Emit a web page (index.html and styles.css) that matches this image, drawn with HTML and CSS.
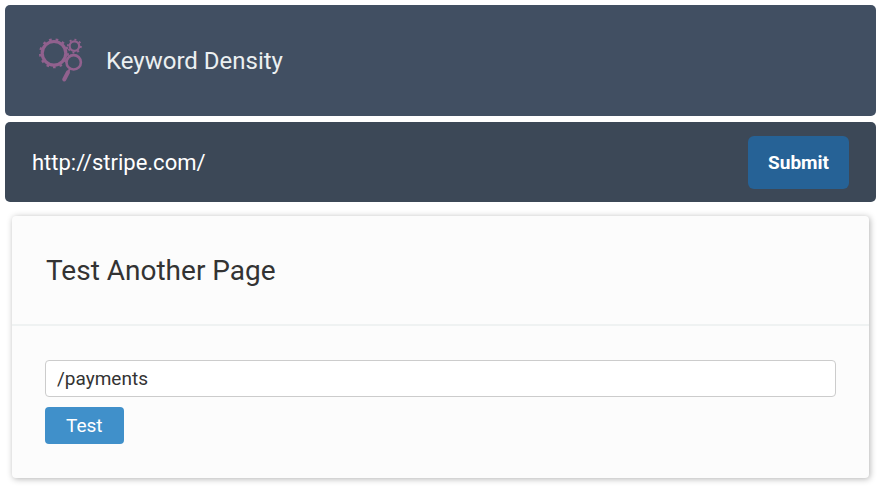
FILE: index.html
```html
<!DOCTYPE html>
<html lang="en">
<head>
    <meta charset="UTF-8">
    <meta name="viewport" content="width=device-width, initial-scale=1.0">
    <title>Keyword Density</title>
    <link rel="stylesheet" href="styles.css">
</head>
<body>

<header class="header">
    <svg class="logo" viewBox="0 0 46 46" fill="none" stroke="#91618e" aria-hidden="true">
        <!-- big gear -->
        <circle cx="16" cy="15.8" r="11.8" stroke-width="3.2"/>
        <circle cx="16" cy="15.8" r="13.8" stroke-width="2.4" pathLength="130" stroke-dasharray="4 6"/>
        <!-- small gear -->
        <circle cx="36.4" cy="8.6" r="4.8" stroke-width="2.3"/>
        <circle cx="36.4" cy="8.6" r="6.5" stroke-width="1.8" pathLength="80" stroke-dasharray="4 6"/>
        <!-- magnifier -->
        <circle cx="35.7" cy="24.8" r="7.2" stroke-width="2.6"/>
        <path d="M31.8 31.4l-1.4 2.6" stroke-width="2"/>
        <path d="M30 34.8l-3.8 7.2" stroke-width="4" stroke-linecap="round"/>
    </svg>
    <h1>Keyword Density</h1>
</header>

<div class="url-bar">
    <span class="url">http://stripe.com/</span>
    <button class="submit" type="button">Submit</button>
</div>

<section class="card">
    <h2>Test Another Page</h2>
    <form class="test-form">
        <input class="path" type="text" value="/payments" aria-label="Page path">
        <button class="test" type="button">Test</button>
    </form>
</section>

</body>
</html>
```

FILE: styles.css
```css
* {
    box-sizing: border-box;
}

body {
    min-height: 100vh;
    margin: 0;
    padding: 5px 9px 8px 5px;
    font-family: Roboto, sans-serif;
    background: #fff;
    color: #333;
}

h1, h2 {
    margin: 0;
    font-weight: 400;
}

.header {
    display: flex;
    align-items: center;
    gap: 22px;
    padding: 32px 33px;
    border-radius: 5px;
    background: #414f62;
    color: #ecf0f1;
}

.logo {
    width: 46px;
    height: 47px;
}

.header h1 {
    font-size: 24px;
    line-height: 46px;
}

.url-bar {
    display: flex;
    justify-content: space-between;
    align-items: center;
    margin-top: 6px;
    padding: 14px 27px 13px;
    border-radius: 5px;
    background: #3c4857;
    color: #fff;
}

.url {
    font-size: 22px;
}

.submit {
    padding: 0 20px;
    border: none;
    border-radius: 6px;
    background: #266296;
    color: #fff;
    font-family: inherit;
    font-size: 19px;
    font-weight: 700;
    line-height: 53px;
    cursor: pointer;
}

.card {
    margin: 14px 7px 0;
    border-radius: 4px;
    background: #fcfcfc;
    box-shadow: 1px 1px 6px rgba(0, 0, 0, 0.3);
}

.card h2 {
    padding: 35px 34px 33px;
    border-bottom: 2px solid #eff2f2;
    font-size: 28px;
    line-height: 40px;
}

.test-form {
    padding: 34px 33px;
}

.path {
    display: block;
    width: 100%;
    height: 37px;
    margin-bottom: 10px;
    padding: 0 11px;
    border: 1px solid #ccc;
    border-radius: 4px;
    background: #fff;
    color: #333;
    font-family: inherit;
    font-size: 19px;
}

.test {
    display: block;
    padding: 0 21px;
    border: none;
    border-radius: 4px;
    background: #4090ca;
    color: #fff;
    font-family: inherit;
    font-size: 19px;
    line-height: 37px;
    cursor: pointer;
}
```
